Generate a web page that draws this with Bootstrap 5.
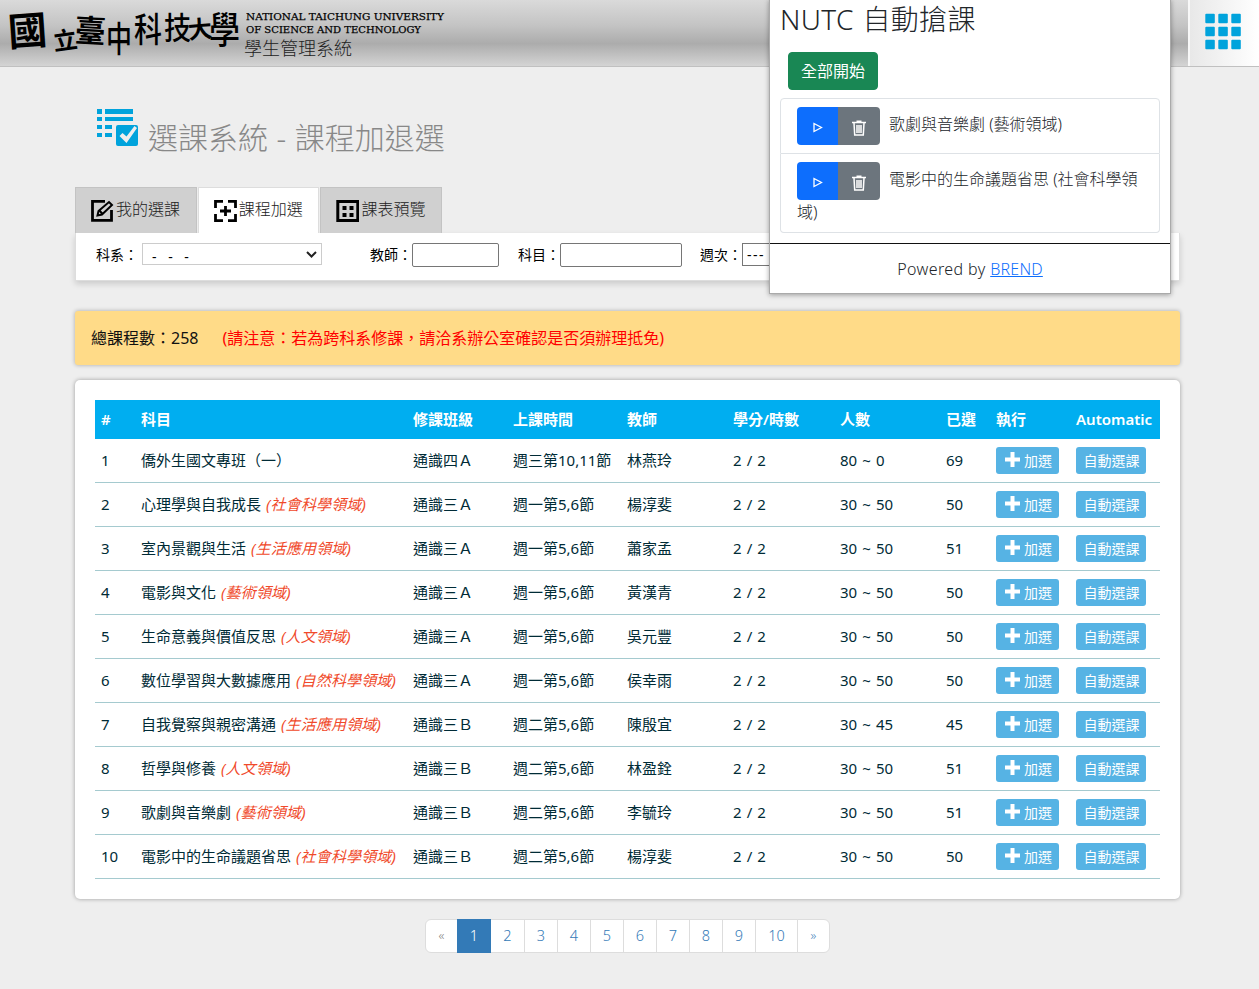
<!DOCTYPE html>
<html lang="zh-Hant">
<head>
<meta charset="utf-8">
<meta name="viewport" content="width=device-width, initial-scale=1">
<title>學生管理系統</title>
<link href="https://cdn.jsdelivr.net/npm/bootstrap@5.3.0/dist/css/bootstrap.min.css" rel="stylesheet">
<style>
body{background:#eee;font-family:"Noto Sans","Noto Sans CJK TC",sans-serif;font-size:15px;color:#002b36;width:1259px;height:989px;overflow:hidden;position:relative}
.topbar{height:67px;background:linear-gradient(#dadada,#c4c4c4 38%,#acacac 66%,#d4d4d4);border-bottom:1px solid #c0c0c0}
.brand-mark{width:244px;height:66px;flex:none}
.brand-mark text{font-family:"Noto Sans CJK TC",sans-serif;font-weight:500;fill:#000}
.univ{font-family:"DejaVu Serif",serif;font-size:10px;line-height:13px;padding:10px 0 0 2px;white-space:nowrap}
.univ text{fill:#000;stroke:#000;stroke-width:.25px}
.sysname{font-size:18px;line-height:24px;font-weight:300;color:#222;white-space:nowrap}
.apps{width:71px;height:66px;background:linear-gradient(90deg,#e8e8e8,#fff);border-left:2px solid #f8f8f8;padding:13px 0 0 15px}
.wrap{width:1105px;margin-left:75px}
.pagehead{height:120px;padding:41px 0 0 20px}
.pagehead h1{font-size:30px;line-height:40px;font-weight:300;color:#888;margin:10px 0 0 10px;white-space:nowrap;word-spacing:.7px}
.tabs{column-gap:1.2px}
.tabs .nav-link{width:121.5px;height:46px;padding:0 0 0 15px;border:1px solid #c3c3c3;border-bottom:0;border-radius:0;background:#d0d0d0;color:#222;font-size:16px;font-weight:300;white-space:nowrap}
.tabs .nav-link svg{margin-top:1px;flex:none}
.tabs .nav-link span{margin:0 0 4px 2px}
.tabs .nav-link.active{background:#fff;border-color:#ddd;color:#222}
.filters{height:48px;background:#fff;border:1px solid #ddd;border-top:0;box-shadow:0 3px 6px rgba(0,0,0,.15);color:#000;font-size:14px;padding:10px 0 0 20px;white-space:nowrap}
.filters label{line-height:23px;flex:none}
.filters input{height:24px;border:1px solid #767676;border-radius:2px;background:#fff;padding:0 4px;flex:none}
.pick{border:1px solid #ccc;height:22px;line-height:25px;padding:0 4px 0 9px;background:#fff;flex:none}
.notice{margin-top:30px;height:54px;background:#ffdb88;border-radius:3px;box-shadow:0 0 4px rgba(0,0,0,.3);padding-left:16px;font-size:16px;font-weight:400;color:#111}
.notice span{color:#f00;margin-left:24px}
.sheet{margin-top:15px;height:519px;background:#fff;border-radius:5px;box-shadow:0 0 4px rgba(0,0,0,.35);padding:20px}
.courses{table-layout:fixed;width:1065px;margin:0;color:#002b36;white-space:nowrap;border-collapse:separate;border-spacing:0;word-spacing:1.2px}
.courses th{height:39px;background:#00aef0;color:#fff;padding:0 0 0 6px;border:0;font-weight:600;font-size:15px;vertical-align:middle}
.courses tbody td{height:44px;padding:0 0 0 6px;border-bottom:1px solid #a5cacf;vertical-align:middle;line-height:22px;color:#002b36}
.courses tbody td:nth-child(-n+8){padding-bottom:2px}
.courses em{color:#f0492a;letter-spacing:.15px}
.courses .btn{background:#56b3e4;color:#fff;border:0;border-radius:3px;font-size:14px;line-height:27px;height:27px;padding:0 0 0 1px;display:flex;align-items:center;justify-content:center;width:70px}
.courses .btn.add{width:63px;padding-left:2px}
.courses .btn.add svg{margin-top:-2px}
.pager{margin:20px 0 0 350px}
.pager .page-link{width:34px;height:34px;padding:0;line-height:31px;text-align:center;font-size:14.5px;font-weight:350;color:#337ab7;border-color:#ddd}
.pager .active .page-link{background:#337ab7;border-color:#337ab7;color:#fff}
.popup{position:absolute;left:769px;top:-1px;width:402px;height:295px;background:#fff;border:1px solid #aaa;box-shadow:0 1px 5px rgba(0,0,0,.35);color:#212529;font-size:16px;font-weight:300;z-index:5}
.popup h2{font-size:28px;line-height:34px;font-weight:300;margin:2px 0 16px 10px;letter-spacing:.35px;word-spacing:1px}
.popup .start-all{margin-left:18px;width:90px;height:38px;padding:0;font-size:16px;line-height:36px;border-radius:4px}
.popup .list-group{margin:8px 10px 0;height:135px;border-radius:4px}
.popup .list-group-item{padding:8px 16px;line-height:24px;font-size:16px}
.popup .btn-group{margin-right:9px}
.popup .list-group-item .btn{width:42px;height:38px;padding:3px 0 0;border:0;border-radius:4px;display:inline-flex;align-items:center;justify-content:center}
.popup .list-group-item .btn-primary{border-top-right-radius:0;border-bottom-right-radius:0}
.popup .list-group-item .btn-secondary{border-top-left-radius:0;border-bottom-left-radius:0}
.popup .foot{border-top:1px solid #111;margin-top:10px;padding-top:13px;text-align:center;line-height:24px;letter-spacing:.4px}
.popup .foot a{color:#0d6efd;letter-spacing:.2px}
</style>
</head>
<body>
<header class="topbar d-flex">
  <svg class="brand-mark" viewBox="0 0 244 66" role="img" aria-label="國立臺中科技大學">
    <text x="8" y="45" font-size="39" transform="rotate(-4 28 30)" style="font-weight:700">國</text>
    <text x="53" y="49" font-size="24" transform="rotate(-8 66 40)" style="font-weight:700">立</text>
    <text x="75" y="42" font-size="31" transform="rotate(3 90 28)" style="font-weight:700">臺</text>
    <text x="106" y="51" font-size="26" transform="translate(0 -17) scale(1 1.35)">中</text>
    <text x="134" y="38" font-size="28" transform="translate(0 -4) scale(1 1.2)">科</text>
    <text x="164" y="37" font-size="27" transform="translate(0 -4) scale(1 1.15)">技</text>
    <text x="188" y="38" font-size="24" transform="rotate(-5 200 30)" style="font-weight:700">大</text>
    <text x="209" y="37" font-size="31" transform="scale(1 1.2)">學</text>
  </svg>
  <div>
    <div class="univ"><svg width="200" height="26" class="d-block"><text x="0" y="9.500" textLength="198" lengthAdjust="spacingAndGlyphs">NATIONAL TAICHUNG UNIVERSITY</text><text x="0" y="22.500" textLength="175" lengthAdjust="spacingAndGlyphs">OF SCIENCE AND TECHNOLOGY</text></svg></div>
    <div class="sysname">學生管理系統</div>
  </div>
  <a class="apps ms-auto d-flex align-items-start" href="#" aria-label="選單"><svg width="37" height="37" viewBox="0 0 37 37" fill="#00a3dc"><g id="r1"><rect x=".3" y=".7" width="9.500" height="9.500" rx="1"/><rect x="13.300" y=".7" width="9.500" height="9.500" rx="1"/><rect x="26.300" y=".7" width="9.500" height="9.500" rx="1"/></g><use href="#r1" y="13"/><use href="#r1" y="26"/></svg></a>
</header>

<main class="wrap">
  <div class="pagehead d-flex align-items-start">
    <svg width="43" height="40" viewBox="0 0 43 40" fill="#00a3dc"><path d="M2 1h5v5H2zM10 1h28v5H10zM2 9h5v4H2zM10 9h28v4H10zM2 17h5v4H2zM10 17h7v4h-7zM2 25h5v4H2zM10 25h7v4h-7z"/><path fill-rule="evenodd" d="M23 17h18q2 0 2 2v17q0 2-2 2H23q-2 0-2-2V19q0-2 2-2zm1.500 11 7 7L42 20l-2.500-2-8 10.500-4-3.500z"/></svg>
    <h1>選課系統 - 課程加退選</h1>
  </div>
  <nav class="nav tabs">
    <a class="nav-link d-flex align-items-center" href="#"><svg width="23" height="22" viewBox="0 0 23 22" fill="none" stroke="#000" stroke-width="2.800"><path d="M14 1.400H1.500v19h19V10"/><path d="m6.500 15.500 1-4.500L18 2l3 3-10 9.500zM8.500 10.500l3 3.500" stroke-width="2"/></svg><span>我的選課</span></a>
    <a class="nav-link active d-flex align-items-center" href="#"><svg width="23" height="22" viewBox="0 0 23 22" fill="none" stroke="#000" stroke-width="2.800"><path d="M9 1.400H1.500V8M14 1.400h7.500V8M1.500 14v6.600H9M21.500 14v6.600H14M11.500 6v10M6 11h11"/></svg><span>課程加選</span></a>
    <a class="nav-link d-flex align-items-center" href="#"><svg width="23" height="22" viewBox="0 0 23 22"><rect x="1.800" y="1.500" width="20" height="19" fill="none" stroke="#000" stroke-width="3"/><path d="M6.500 6h4v4h-4zM13.500 6h4v4h-4zM6.500 13h4v4h-4zM13.500 13h4v4h-4z"/></svg><span>課表預覽</span></a>
  </nav>
  <div class="filters d-flex align-items-start">
    <label>科系：</label><div class="pick d-flex" style="width:180px;margin-left:4px"><span style="word-spacing:8px">- - -</span><svg class="ms-auto" style="margin-top:7px" width="11" height="8" fill="none" stroke="#222" stroke-width="2"><path d="m1 1 4.500 4.500L10 1"/></svg></div>
    <label style="margin-left:48px">教師：</label><input aria-label="教師" style="width:87px">
    <label style="margin-left:19px">科目：</label><input aria-label="科目" style="width:122px">
    <label style="margin-left:18px">週次：</label><div class="pick" style="width:60px;height:23px;line-height:22px;border-color:#767676;padding-left:4px;letter-spacing:1.500px">---</div>
  </div>
  <div class="notice d-flex align-items-center">總課程數：258<span>(請注意：若為跨科系修課，請洽系辦公室確認是否須辦理抵免)</span></div>

  <div class="sheet">
    <table class="courses">
      <colgroup><col style="width:40px"><col style="width:272px"><col style="width:100px"><col style="width:114px"><col style="width:106px"><col style="width:107px"><col style="width:106px"><col style="width:50px"><col style="width:80px"><col style="width:90px"></colgroup>
      <thead><tr><th>#</th><th>科目</th><th>修課班級</th><th>上課時間</th><th>教師</th><th>學分/時數</th><th>人數</th><th>已選</th><th>執行</th><th>Automatic</th></tr></thead>
      <tbody id="rows"></tbody>
    </table>
  </div>
  <ul class="pagination pager">
    <li class="page-item disabled"><a class="page-link" style="width:33px;color:#777;background:#fff;font-size:13px">«</a></li>
    <li class="page-item active"><a class="page-link" href="#">1</a></li>
    <li class="page-item"><a class="page-link" href="#" style="width:35px">2</a></li>
    <li class="page-item"><a class="page-link" href="#">3</a></li>
    <li class="page-item"><a class="page-link" href="#">4</a></li>
    <li class="page-item"><a class="page-link" href="#">5</a></li>
    <li class="page-item"><a class="page-link" href="#">6</a></li>
    <li class="page-item"><a class="page-link" href="#">7</a></li>
    <li class="page-item"><a class="page-link" href="#">8</a></li>
    <li class="page-item"><a class="page-link" href="#">9</a></li>
    <li class="page-item"><a class="page-link" href="#" style="width:43px">10</a></li>
    <li class="page-item"><a class="page-link" href="#" style="width:33px;font-size:13px">»</a></li>
  </ul>
</main>

<aside class="popup">
  <h2>NUTC 自動搶課</h2>
  <button class="btn btn-success start-all d-block">全部開始</button>
  <ul class="list-group">
    <li class="list-group-item"><span class="btn-group"><button class="btn btn-primary" aria-label="開始"><svg width="10" height="11" fill="none" stroke="#fff" stroke-width="1.300"><path d="M1 1.500v8l7.500-4z"/></svg></button><button class="btn btn-secondary" aria-label="刪除"><svg width="14" height="16" viewBox="0 0 14 16" fill="none" stroke="#fff" stroke-width="1.500"><path d="M0 2.500h14M4.500 1.200h5M2 3l.7 12h8.600L12 3M5 5v8M7 5v8M9 5v8"/></svg></button></span>歌劇與音樂劇 (藝術領域)</li>
    <li class="list-group-item"><span class="btn-group"><button class="btn btn-primary" aria-label="開始"><svg width="10" height="11" fill="none" stroke="#fff" stroke-width="1.300"><path d="M1 1.500v8l7.500-4z"/></svg></button><button class="btn btn-secondary" aria-label="刪除"><svg width="14" height="16" viewBox="0 0 14 16" fill="none" stroke="#fff" stroke-width="1.500"><path d="M0 2.500h14M4.500 1.200h5M2 3l.7 12h8.600L12 3M5 5v8M7 5v8M9 5v8"/></svg></button></span>電影中的生命議題省思 (社會科學領域)</li>
  </ul>
  <div class="foot">Powered by <a href="#">BREND</a></div>
</aside>

<script src="https://cdn.jsdelivr.net/npm/bootstrap@5.3.0/dist/js/bootstrap.bundle.min.js"></script>
<script>
const courses = [
  ['僑外生國文專班（一）','','四Ａ','三第10,11節','林燕玲','80 ~ 0',69],
  ['心理學與自我成長','社會科學領域','三Ａ','一第5,6節','楊淳斐','30 ~ 50',50],
  ['室內景觀與生活','生活應用領域','三Ａ','一第5,6節','蕭家孟','30 ~ 50',51],
  ['電影與文化','藝術領域','三Ａ','一第5,6節','黃漢青','30 ~ 50',50],
  ['生命意義與價值反思','人文領域','三Ａ','一第5,6節','吳元豐','30 ~ 50',50],
  ['數位學習與大數據應用','自然科學領域','三Ａ','一第5,6節','侯幸雨','30 ~ 50',50],
  ['自我覺察與親密溝通','生活應用領域','三Ｂ','二第5,6節','陳殷宜','30 ~ 45',45],
  ['哲學與修養','人文領域','三Ｂ','二第5,6節','林盈銓','30 ~ 50',51],
  ['歌劇與音樂劇','藝術領域','三Ｂ','二第5,6節','李毓玲','30 ~ 50',51],
  ['電影中的生命議題省思','社會科學領域','三Ｂ','二第5,6節','楊淳斐','30 ~ 50',50]
];
document.getElementById('rows').innerHTML = courses.map((c, i) => `<tr>
  <td>${i + 1}</td><td>${c[0]}${c[1] ? ` <em>(${c[1]})</em>` : ''}</td><td>通識${c[2]}</td><td>週${c[3]}</td>
  <td>${c[4]}</td><td>2 / 2</td><td>${c[5]}</td><td>${c[6]}</td>
  <td><button class="btn add"><svg class="me-1" width="15" height="15" fill="#fff"><path d="M5.500 0h4v5.500H15v4H9.500V15h-4V9.500H0v-4h5.500z"/></svg>加選</button></td>
  <td><button class="btn">自動選課</button></td></tr>`).join('');
</script>
</body>
</html>
